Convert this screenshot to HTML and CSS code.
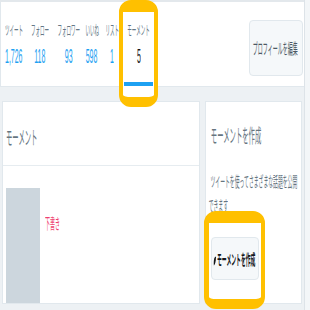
FILE: index.html
```html
<!DOCTYPE html>
<html lang="ja">
<head>
<meta charset="utf-8">
<title>モーメント</title>
<link rel="stylesheet" href="styles.css">
</head>
<body>
<div class="page">
  <div class="topstrip"></div>
  <div class="profile-nav">
    <ul class="stats">
      <li class="stat first"><span class="sq o-left label">ツイート</span><span class="sq o-left value">1,726</span></li>
      <li class="stat"><span class="sq label">フォロー</span><span class="sq value">118</span></li>
      <li class="stat"><span class="sq label">フォロワー</span><span class="sq value">93</span></li>
      <li class="stat"><span class="sq label">いいね</span><span class="sq value">598</span></li>
      <li class="stat"><span class="sq label">リスト</span><span class="sq value">1</span></li>
      <li class="stat active"><span class="sq label">モーメント</span><span class="sq value">5</span></li>
    </ul>
    <button class="edit-btn"><span class="sq o-right">プロフィールを編集</span></button>
  </div>
  <div class="cards">
    <section class="card main-card">
      <h2 class="card-title"><span class="sq o-left">モーメント</span></h2>
      <div class="card-body">
        <div class="thumb"></div>
        <span class="sq o-left draft">下書き</span>
      </div>
    </section>
    <section class="card side-card">
      <h2 class="card-title"><span class="sq o-right">モーメントを作成</span></h2>
      <p class="desc">
        <span class="sq o-right line1">ツイートを使ってさまざまな話題を公開</span>
        <span class="sq o-right line2">できます</span>
      </p>
      <button class="create-btn"><span class="sq o-right"><svg class="icon" width="9" height="10" viewBox="0 0 12 12" preserveAspectRatio="none"><path d="M2 11.5 C0.5 8 2 3.5 6 1.5 L11 0.5 L10 5 C8 9 5 10.5 2 11.5 Z" fill="#14171a"/></svg>モーメントを作成</span></button>
    </section>
  </div>
</div>
<div class="mark mark-tab"></div>
<div class="mark mark-btn"></div>
</body>
</html>
```

FILE: styles.css
```css
* { box-sizing: border-box; }
html, body {
  margin: 0;
  padding: 0;
  width: 310px;
  height: 310px;
  overflow: hidden;
  background: #f3f6f8;
}
body { position: relative; }

.page {
  width: 305px;
  height: 310px;
  background: #edf1f4;
  border-right: 1px solid #dde3e8;
  font-family: "Noto Sans CJK JP", "Noto Sans", sans-serif;
}

/* text of the capture is squeezed horizontally to a third */
.sq {
  display: inline-block;
  flex-shrink: 0;
  white-space: nowrap;
  transform: scaleX(0.3333);
  transform-origin: 50% 50%;
}
.sq.o-left { transform-origin: 0 50%; }
.sq.o-right { transform-origin: 100% 50%; }

.topstrip {
  height: 2px;
  background: #e3e8ec;
}

.profile-nav {
  display: flex;
  justify-content: space-between;
  align-items: flex-start;
  height: 85px;
  background: #fff;
  border-left: 1px solid #e1e8ed;
  border-bottom: 1px solid #e1e8ed;
  padding-left: 1px;
}

.stats {
  display: grid;
  grid-template-columns: 23px 29px 30px 16px 24px 29px;
  margin: 0;
  padding: 0;
  list-style: none;
  height: 84px;
}

.stat {
  display: flex;
  flex-direction: column;
  align-items: center;
  padding-top: 19px;
  border-bottom: 4px solid transparent;
}
.stat.first {
  align-items: flex-start;
  padding-left: 3px;
}
.stat.active { border-bottom-color: #1da1f2; }

.label {
  font-size: 13.5px;
  line-height: 16px;
  color: #657786;
}
.value {
  margin-top: 6px;
  font-family: "Liberation Sans", Arial, sans-serif;
  font-size: 21px;
  line-height: 25px;
  color: #1da1f2;
}
.stat.active .value { color: #14171a; }

.edit-btn {
  display: flex;
  align-items: center;
  justify-content: flex-end;
  margin: 18px 1px 0 0;
  width: 54px;
  height: 56px;
  padding: 0 4px 0 0;
  background: #f5f8fa;
  border: 1px solid #e1e8ed;
  border-radius: 4px;
  font-family: "Noto Sans CJK JP", sans-serif;
  font-size: 15px;
  line-height: 16px;
  color: #4b5863;
}

.cards {
  display: flex;
  gap: 5px;
  padding: 14px 2px 0 2px;
}

.card {
  background: #fff;
  border: 1px solid #e1e8ed;
  height: 203px;
}
.main-card {
  width: 198px;
  display: flex;
  flex-direction: column;
}
.side-card {
  width: 97px;
  padding: 0 3px;
}

.card-title {
  margin: 0;
  font-size: 19px;
  line-height: 24px;
  font-weight: 400;
  color: #66757f;
}
.main-card .card-title {
  padding: 23px 3px 16px;
  border-bottom: 1px solid #e6ecf0;
}
.side-card .card-title {
  display: flex;
  justify-content: flex-end;
  padding-top: 21px;
}
.side-card .card-title .sq { margin-right: 37px; }

.card-body {
  flex: 1;
  display: flex;
  align-items: flex-start;
  padding: 22px 3px 0;
}
.thumb {
  width: 34px;
  align-self: stretch;
  background: #ccd6dd;
}
.draft {
  margin: 25px 0 0 5px;
  font-size: 15px;
  line-height: 19px;
  color: #ef3f6e;
}

.desc {
  display: flex;
  flex-direction: column;
  align-items: flex-end;
  margin: 22px 0 0;
  font-size: 14.5px;
  line-height: 24px;
  color: #66757f;
}
.line1 { margin-right: 1px; }
.line2 { margin-right: 69.7px; }

.create-btn {
  display: flex;
  align-items: center;
  justify-content: flex-end;
  margin: 20px 0 0 2px;
  width: 48px;
  height: 43px;
  padding: 0 2.5px 0 0;
  background: #f5f8fa;
  border: 1px solid #e1e8ed;
  border-radius: 4px;
  font-family: "Noto Sans CJK JP", sans-serif;
  font-size: 14.5px;
  line-height: 16px;
  font-weight: 700;
  color: #14171a;
}
.icon {
  vertical-align: -1px;
  margin-right: 2px;
}

/* annotation highlights drawn over the capture */
.mark {
  position: absolute;
  border-style: solid;
  border-color: #ffc000;
  border-radius: 12px;
  background-clip: padding-box;
}
.mark-tab {
  left: 119px;
  top: 0;
  width: 39px;
  height: 107px;
  border-width: 12px 4px 10px 4px;
  background-image: linear-gradient(to bottom, transparent 74px, #fff 74px);
}
.mark-btn {
  left: 204px;
  top: 211px;
  width: 61px;
  height: 98px;
  border-width: 12px 4px 10px 5px;
}
```
